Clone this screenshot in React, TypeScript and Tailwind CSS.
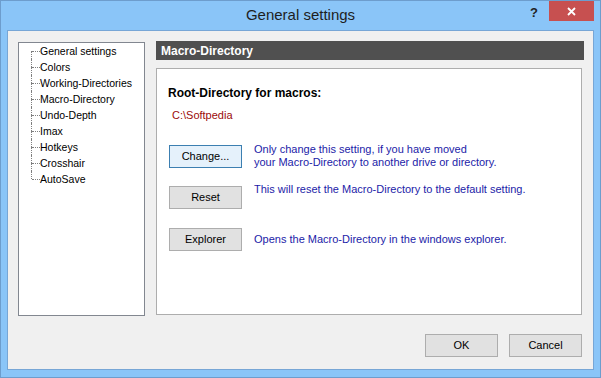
import type { ReactNode } from 'react';

const font = { fontFamily: '"Liberation Sans", Arial, sans-serif' };

const treeItems = [
  'General settings',
  'Colors',
  'Working-Directories',
  'Macro-Directory',
  'Undo-Depth',
  'Imax',
  'Hotkeys',
  'Crosshair',
  'AutoSave',
];

function TreeRow({ label, index, count }: { label: string; index: number; count: number }) {
  const first = index === 0;
  const last = index === count - 1;
  return (
    <div className="flex h-[16px] items-stretch">
      <div className="w-[12px]" />
      <div className="flex w-[1px] flex-col">
        <div className={first ? 'h-[8px]' : 'h-[8px] border-l border-dotted border-[#808080]'} />
        <div className={last ? 'h-[8px]' : 'h-[8px] border-l border-dotted border-[#808080]'} />
      </div>
      <div className="flex w-[8px] items-center">
        <div className="w-full border-t border-dotted border-[#808080]" />
      </div>
      <div className="flex items-center text-[10.5px] leading-none text-black">{label}</div>
    </div>
  );
}

function Button({ children, focused, className = '' }: { children: ReactNode; focused?: boolean; className?: string }) {
  return (
    <button
      className={`flex h-[23px] w-[73px] shrink-0 items-center justify-center border text-[11px] text-black ${
        focused ? 'border-[#3c7fb1] bg-[#e5f1fb]' : 'border-[#adadad] bg-[#e1e1e1]'
      } ${className}`}
    >
      {children}
    </button>
  );
}

export default function App() {
  return (
    <div className="h-[378px] w-[601px] border border-[#6d9dcd] bg-[#8ac5f8]" style={font}>
      {/* title bar */}
      <div className="grid h-[29px] grid-cols-[1fr_auto_1fr]">
        <div />
        <div className="pt-[5px] text-[15px] leading-[18px] text-[#1e1e1e]">General settings</div>
        <div className="flex items-start justify-end pr-[6px]">
          <span className="mr-[11px] mt-[5px] text-[13px] font-bold leading-[14px] text-[#222]">?</span>
          <div className="flex h-[20px] w-[45px] items-center justify-center bg-[#c75050]">
            <svg width="9" height="9" viewBox="0 0 9 9">
              <path d="M1 1L8 8M8 1L1 8" stroke="#fff" strokeWidth="1.8" />
            </svg>
          </div>
        </div>
      </div>

      {/* client */}
      <div className="mx-[6px] flex h-[340px] flex-col border border-[#77a6d6] bg-[#f0f0f0]">
        <div className="flex pl-[10px] pt-[10px]">
          <div className="mt-[1px] h-[274px] w-[127px] border border-[#828790] bg-white">
            {treeItems.map((item, i) => (
              <TreeRow key={item} label={item} index={i} count={treeItems.length} />
            ))}
          </div>

          <div className="ml-[11px] w-[428px]">
            <div className="flex h-[19px] items-center bg-[#505050] pl-[5px] text-[12px] font-bold text-white">
              Macro-Directory
            </div>
            <div className="mt-[8px] h-[247px] w-[426px] border border-[#adadad] bg-white pt-[17px]">
              <div className="pl-[11px] text-[12px] font-bold leading-[15px] text-black">Root-Directory for macros:</div>
              <div className="mt-[8px] pl-[15px] text-[11px] leading-[13px] text-[#9b0a0a]">C:\Softpedia</div>

              <div className="mt-[23px] flex items-start pl-[12px]">
                <Button focused>Change...</Button>
                <div className="-mt-[2px] ml-[12px] text-[11px] leading-[13px] text-[#1c1ca8]">
                  Only change this setting, if you have moved
                  <br />
                  your Macro-Directory to another drive or directory.
                </div>
              </div>

              <div className="mt-[17px] flex items-start pl-[12px]">
                <Button>Reset</Button>
                <div className="-mt-[3px] ml-[12px] text-[11px] leading-[13px] text-[#1c1ca8]">
                  This will reset the Macro-Directory to the default setting.
                </div>
              </div>

              <div className="mt-[19px] flex items-center pl-[12px]">
                <Button>Explorer</Button>
                <div className="ml-[12px] text-[11px] leading-[13px] text-[#1c1ca8]">
                  Opens the Macro-Directory in the windows explorer.
                </div>
              </div>
            </div>
          </div>
        </div>

        <div className="mt-[18px] flex justify-end gap-[11px] pr-[11px]">
          <Button>OK</Button>
          <Button>Cancel</Button>
        </div>
      </div>
    </div>
  );
}
